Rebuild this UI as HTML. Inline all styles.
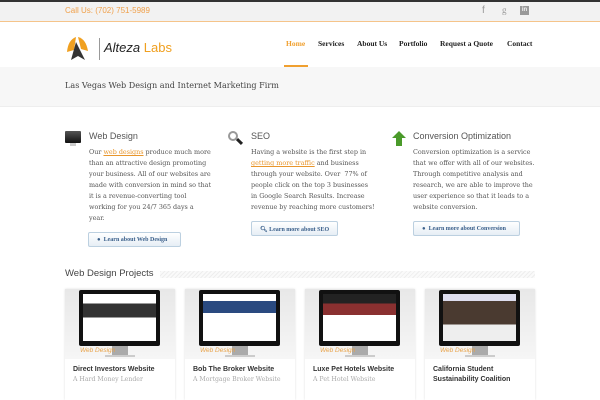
<!DOCTYPE html>
<html><head><style>
*{margin:0;padding:0;box-sizing:border-box}
body{width:600px;height:400px;overflow:hidden;background:#fff;font-family:"Liberation Serif",serif;position:relative}
.a{position:absolute}
.top{left:0;top:0;width:600px;height:22px;background:#f2f2f2;border-top:2px solid #333;border-bottom:1px solid #f5c48a}
.hdr{top:22px;left:0;width:600px;height:45px;background:#fff}
.nav{top:39px;font-size:7.5px;font-weight:bold;color:#222}
.band{top:67px;left:0;width:600px;height:40px;background:#f7f7f7;border-bottom:1px solid #eee}
.h{font-family:"Liberation Sans",sans-serif;font-size:9px;color:#555;top:131px}
.p{font-family:"DejaVu Serif",serif;font-size:6.4px;line-height:11px;color:#555;top:147px;white-space:nowrap}
.p u{color:#e8962c;text-decoration:underline}
.btn{height:15px;border:1px solid #bcd0e0;background:linear-gradient(#fff,#e6eef5);font-size:6px;font-weight:bold;color:#3a5f8a;padding:4px 0 0 8px;border-radius:2px}
.card{top:289px;width:110px;height:111px;background:#fff;box-shadow:0 0 2px #ddd}
.img{height:70px;background:linear-gradient(#e8e8e8,#f6f6f6);position:relative}
.mon{position:absolute;left:14px;top:1px;width:81px;height:56px;background:#111;border-radius:2px}
.scr{position:absolute;left:4px;top:4px;right:4px;bottom:5px;background:#eee}
.std{position:absolute;left:47px;top:57px;width:16px;height:9px;background:#aaa}
.base{position:absolute;left:40px;top:66px;width:30px;height:2px;background:#ccc}
.wd{position:absolute;left:15px;top:58px;font-family:"Liberation Sans",sans-serif;font-style:italic;font-size:6.5px;color:#e8a34a}
.t{font-family:"Liberation Sans",sans-serif;font-weight:bold;font-size:7px;color:#333;padding:6px 0 0 8px;line-height:10px}
.s{font-family:"DejaVu Serif",serif;font-size:6.2px;color:#aaa;padding-left:8px;line-height:10px}
</style></head><body>
<div class="a top"></div>
<div class="a" style="left:65px;top:6px;font-family:'Liberation Sans',sans-serif;font-size:8px;color:#f0a04a">Call Us: (702) 751-5989</div>
<div class="a" style="left:482px;top:5px;font-size:10px;color:#999;font-family:'Liberation Sans',sans-serif">f</div>
<div class="a" style="left:502px;top:5px;font-size:9px;color:#999">g</div>
<div class="a" style="left:520px;top:6px;width:9px;height:9px;background:#999;color:#f2f2f2;font-size:6px;font-weight:bold;text-align:center;line-height:9px;font-family:'Liberation Sans',sans-serif">in</div>
<div class="a hdr"></div>
<svg class="a" style="left:65px;top:36px" width="30" height="26"><path d="M2 16 Q3 4 11 1 L9 14Z" fill="#f0a020"/><path d="M13 1 Q21 3 23 15 L16 13Z" fill="#f0a020"/><path d="M11 6 L6 24 L13 20 L20 24Z" fill="#333"/></svg>
<div class="a" style="left:99px;top:38px;width:1px;height:22px;background:#999"></div>
<div class="a" style="left:104px;top:40px;font-family:'Liberation Sans',sans-serif;font-style:italic;font-size:13px;color:#222">Alteza <span style="color:#f0a020;font-style:normal">Labs</span></div>
<div class="a nav" style="left:286px;color:#f0a030">Home</div>
<div class="a nav" style="left:318px">Services</div>
<div class="a nav" style="left:357px">About Us</div>
<div class="a nav" style="left:399px">Portfolio</div>
<div class="a nav" style="left:440px">Request a Quote</div>
<div class="a nav" style="left:507px">Contact</div>
<div class="a" style="left:284px;top:65px;width:24px;height:2px;background:#f0a030"></div>
<div class="a band"></div>
<div class="a" style="left:65px;top:80px;font-family:'DejaVu Serif',serif;font-size:8.1px;color:#444">Las Vegas Web Design and Internet Marketing Firm</div>

<div class="a" style="left:65px;top:131px;width:16px;height:12px;background:linear-gradient(#555,#111);border-radius:1px"></div>
<div class="a" style="left:70px;top:143px;width:6px;height:3px;background:#ccc"></div>
<div class="a h" style="left:89px">Web Design</div>
<div class="a p" style="left:89px">Our <u>web designs</u> produce much more<br>than an attractive design promoting<br>your business. All of our websites are<br>made with conversion in mind so that<br>it is a revenue-converting tool<br>working for you 24/7 365 days a<br>year.</div>
<div class="a btn" style="left:88px;top:232px;width:93px">● &nbsp;Learn about Web Design</div>

<div class="a" style="left:228px;top:131px;width:10px;height:10px;border:2px solid #999;border-radius:50%"></div>
<div class="a" style="left:236px;top:140px;width:7px;height:3px;background:#222;transform:rotate(45deg)"></div>
<div class="a h" style="left:251px">SEO</div>
<div class="a p" style="left:251px">Having a website is the first step in<br><u>getting more traffic</u> and business<br>through your website. Over &nbsp;77% of<br>people click on the top 3 businesses<br>in Google Search Results. Increase<br>revenue by reaching more customers!</div>
<div class="a btn" style="left:251px;top:221px;width:87px">🔍︎ Learn more about SEO</div>

<svg class="a" style="left:392px;top:131px" width="14" height="15"><path d="M7 0 L14 7 L10 7 L10 15 L4 15 L4 7 L0 7Z" fill="#4a9a2a"/></svg>
<div class="a h" style="left:413px">Conversion Optimization</div>
<div class="a p" style="left:413px">Conversion optimization is a service<br>that we offer with all of our websites.<br>Through competitive analysis and<br>research, we are able to improve the<br>user experience so that it leads to a<br>website conversion.</div>
<div class="a btn" style="left:413px;top:221px;width:107px">● &nbsp;Learn more about Conversion</div>

<div class="a" style="left:65px;top:268px;font-family:'Liberation Sans',sans-serif;font-size:9.5px;color:#444">Web Design Projects</div>
<div class="a" style="left:160px;top:271px;width:375px;height:7px;background:repeating-linear-gradient(135deg,#eee 0 1px,#fafafa 1px 3px)"></div>

<div class="a card" style="left:65px"><div class="img"><div class="mon"><div class="scr" style="background:linear-gradient(#fff 20%,#333 20%,#333 50%,#fff 50%)"></div></div><div class="std"></div><div class="base"></div><div class="wd">Web Design</div></div><div class="t">Direct Investors Website</div><div class="s">A Hard Money Lender</div></div>
<div class="a card" style="left:185px"><div class="img"><div class="mon"><div class="scr" style="background:linear-gradient(#fff 15%,#2a4a80 15%,#2a4a80 40%,#fff 40%)"></div></div><div class="std"></div><div class="base"></div><div class="wd">Web Design</div></div><div class="t">Bob The Broker Website</div><div class="s">A Mortgage Broker Website</div></div>
<div class="a card" style="left:305px"><div class="img"><div class="mon"><div class="scr" style="background:linear-gradient(#222 20%,#8a3030 20%,#8a3030 45%,#fff 45%)"></div></div><div class="std"></div><div class="base"></div><div class="wd">Web Design</div></div><div class="t">Luxe Pet Hotels Website</div><div class="s">A Pet Hotel Website</div></div>
<div class="a card" style="left:425px"><div class="img"><div class="mon"><div class="scr" style="background:linear-gradient(#dde 15%,#4a3a30 15%,#4a3a30 65%,#eee 65%)"></div></div><div class="std"></div><div class="base"></div><div class="wd">Web Design</div></div><div class="t">California Student Sustainability Coalition</div></div>
</body></html>
